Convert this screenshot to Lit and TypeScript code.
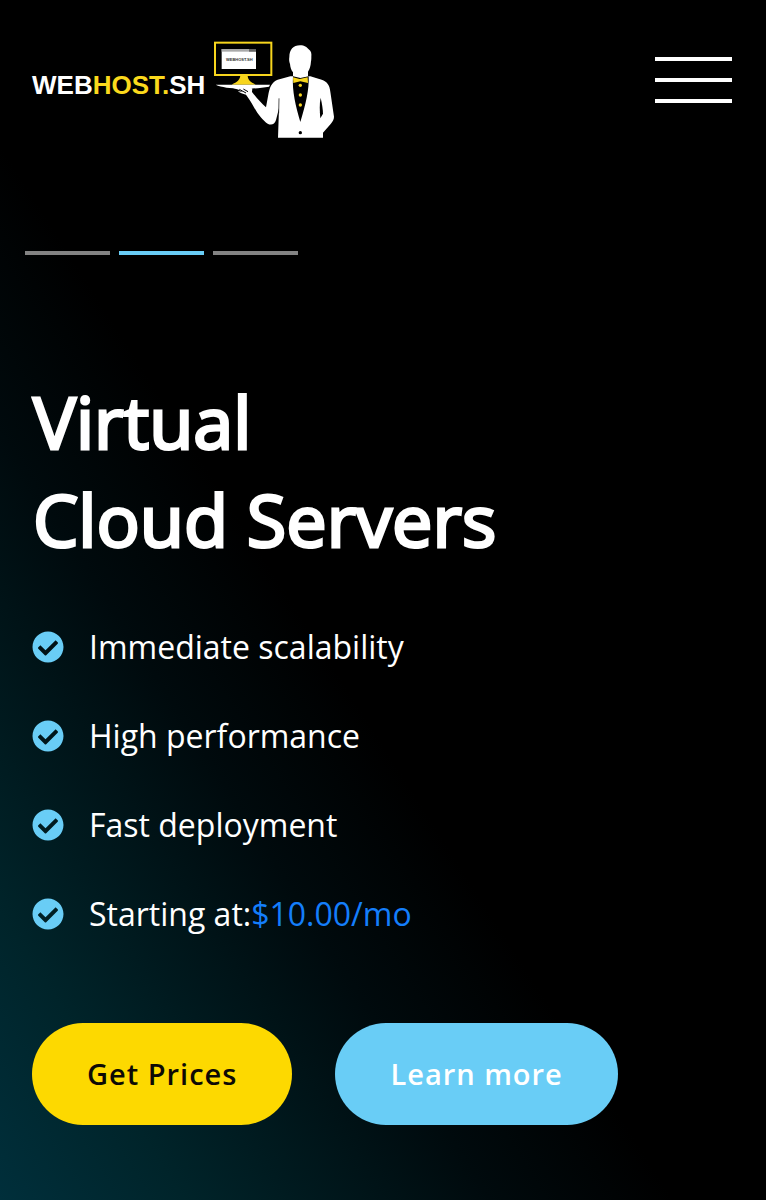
import { LitElement, html, css, svg } from "lit";
import { customElement, property, state } from "lit/decorators.js";
import { classMap } from "lit/directives/class-map.js";

@customElement("site-logo")
export class SiteLogo extends LitElement {
  static styles = css`
    :host {
      display: block;
    }
    .logo {
      display: flex;
      align-items: center;
      gap: 9px;
      color: #fff;
      text-decoration: none;
      font: 700 26px/28px "Liberation Sans", Arial, sans-serif;
    }
    .word {
      padding-bottom: 10px;
    }
    .accent {
      color: #fbd91c;
    }
    .butler {
      display: block;
      width: 124px;
      height: 98px;
    }
    .screen-text {
      font: 700 12px "Liberation Sans", Arial, sans-serif;
    }
  `;

  render() {
    return html`
      <a class="logo" href="#" aria-label="WEBHOST.SH home">
        <span class="word">WEB<span class="accent">HOST.</span>SH</span>
        ${this.butler()}
      </a>
    `;
  }

  private butler() {
    return html`<svg class="butler" viewBox="27 33 372 294" aria-hidden="true">
      ${svg`
        <rect x="30" y="38" width="169" height="97" fill="#000" stroke="#f7d51d" stroke-width="6" />
        <rect x="50" y="57" width="103" height="60" fill="#fff" />
        <rect x="50" y="57" width="103" height="8" fill="#aaa" />
        <rect x="132" y="57" width="21" height="8" fill="#666" />
        <text class="screen-text" x="63" y="94" fill="#333">WEBHOST.SH</text>
        <path d="M106 136h22c0 14 8 20 24 28H80c17-8 25-14 26-28z" fill="#f7d51d" />
        <path fill="#fff" d="M32 164h163l-3 6c-26 5-58 7-85 6-30-1-58-4-75-12z" />
        <path fill="#fff" d="M84 174l36-2 22 3-1 11c12 15 28 34 42 46l8-44c5-22 13-34 27-39l38-10 8 0 22 30 22-30 8 0 34 10c16 5 24 16 26 36l11 75c0 8-4 14-10 22l-23 26v15H219l3-88-9 35c-4 13-14 17-25 11-14-9-30-29-42-51-8-15-15-25-23-36-10-2-18-5-25-11l16 3-13-7z" />
        <path fill="#fff" d="M285 46c14 0 20 5 26 12 8 5 9 13 8 22 0 6 0 10-1 14-1 15-4 25-9 31v15l-23 8-22-8v-13c-5-6-8-15-9-25-3-8-3-14-2-21 0-22 12-35 32-35z" />
        <path fill="#000" d="M264 139l22 5 25-5c2 39-9 85-25 137-14-48-25-92-22-137z" />
        <path fill="#f7d51d" d="M264 142l20 5 24-5 1 17-23-5-21 5z" />
        <g fill="#f7d51d"><circle cx="286" cy="166" r="5" /><circle cx="286" cy="195" r="5" /><circle cx="286" cy="225" r="5" /></g>
        <circle cx="286" cy="308" r="5" fill="#000" />
        <path d="M347 203c4 18 7 36 7 48l-8 14c-2-22-3-42 1-62z" fill="#000" />
        <path d="M222 205l-1 45" stroke="#000" stroke-width="2" />
        <path d="M103 178l20 11M115 177l14 8" stroke="#000" stroke-width="3" />
      `}
    </svg>`;
  }
}

@customElement("check-item")
export class CheckItem extends LitElement {
  static styles = css`
    :host {
      display: flex;
      align-items: center;
      gap: 25px;
    }
    .icon {
      flex: none;
      width: 32px;
      height: 32px;
    }
  `;

  render() {
    return html`
      <svg class="icon" viewBox="0 0 512 512" aria-hidden="true">
        <path
          fill="#69cdf6"
          d="M504 256c0 136.967-111.033 248-248 248S8 392.967 8 256 119.033 8 256 8s248 111.033 248 248zM227.314 387.314l184-184c6.248-6.248 6.248-16.379 0-22.627l-22.627-22.627c-6.248-6.249-16.379-6.249-22.628 0L216 308.118l-70.059-70.059c-6.248-6.248-16.379-6.248-22.628 0l-22.627 22.627c-6.248 6.248-6.248 16.379 0 22.627l104 104c6.249 6.249 16.379 6.249 22.628.001z"
        />
      </svg>
      <span><slot></slot></span>
    `;
  }
}

@customElement("app-root")
export class AppRoot extends LitElement {
  static styles = css`
    :host {
      display: block;
      box-sizing: border-box;
      min-height: 100vh;
      background: linear-gradient(to top right, #002f3b 0%, #00242a 12%, #000a0d 32%, #000 44%);
      color: #fff;
      font-family: "Open Sans", "Noto Sans", sans-serif;
    }
    .header {
      display: flex;
      align-items: flex-start;
      justify-content: space-between;
      padding: 41px 34px 0 32px;
    }
    .menu {
      display: grid;
      gap: 17px;
      width: 77px;
      margin-top: 16px;
      padding: 0;
      border: 0;
      background: none;
      cursor: pointer;
    }
    .line {
      height: 4px;
      background: #fff;
    }
    .slides {
      display: flex;
      gap: 9px;
      padding: 112px 25px 0;
    }
    .slide {
      width: 85px;
      height: 4px;
      padding: 0;
      border: 0;
      background: #838383;
      cursor: pointer;
    }
    .slide.active {
      background: #69cdf6;
    }
    .hero {
      padding: 117px 32px 74px;
    }
    .title {
      margin: 0;
      padding-left: 1px;
      font-size: 72px;
      line-height: 98px;
      font-weight: 400;
      -webkit-text-stroke: 3px #fff;
    }
    .features {
      display: grid;
      gap: 44px;
      margin: 56px 0 0;
      padding: 0;
      list-style: none;
      font-size: 32px;
      line-height: 45px;
    }
    .price {
      color: #147efb;
    }
    .actions {
      display: flex;
      flex-wrap: wrap;
      gap: 43px;
      margin-top: 87px;
    }
    .button {
      padding: 0 55px;
      border-radius: 51px;
      font-size: 29px;
      line-height: 102px;
      font-weight: 600;
      letter-spacing: 1px;
      text-decoration: none;
    }
    .primary {
      background: #fdd900;
      color: #0d0a05;
    }
    .secondary {
      background: #69cdf6;
      color: #fff;
    }
  `;

  @property({ attribute: false }) features = ["Immediate scalability", "High performance", "Fast deployment"];
  @state() private active = 1;

  render() {
    return html`
      <header class="header">
        <site-logo></site-logo>
        <button class="menu" type="button" aria-label="Menu">
          <span class="line"></span><span class="line"></span><span class="line"></span>
        </button>
      </header>
      <nav class="slides" aria-label="Slides">
        ${[0, 1, 2].map(
          (i) => html`<button
            type="button"
            class=${classMap({ slide: true, active: i === this.active })}
            aria-label=${`Slide ${i + 1}`}
            @click=${() => (this.active = i)}
          ></button>`
        )}
      </nav>
      <main class="hero">
        <h1 class="title">Virtual<br />Cloud Servers</h1>
        <ul class="features">
          ${this.features.map((f) => html`<li><check-item>${f}</check-item></li>`)}
          <li><check-item>Starting at:<span class="price">$10.00/mo</span></check-item></li>
        </ul>
        <div class="actions">
          <a class="button primary" href="#prices">Get Prices</a>
          <a class="button secondary" href="#more">Learn more</a>
        </div>
      </main>
    `;
  }
}
